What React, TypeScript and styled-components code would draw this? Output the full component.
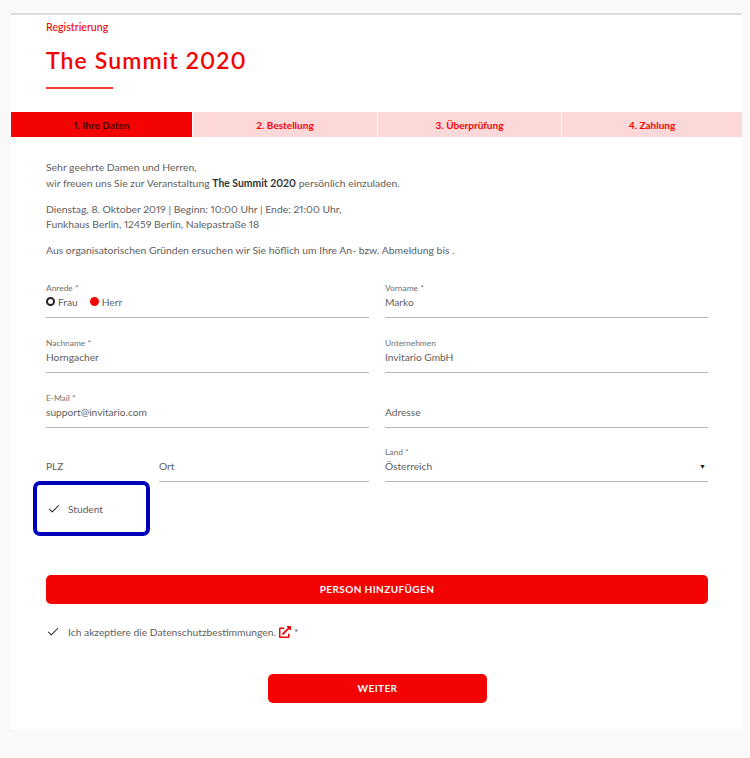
import { createGlobalStyle, styled } from "styled-components";
import { Check } from "lucide-react";
import { FaExternalLinkAlt } from "react-icons/fa";

const RED = "#f40303";

const Global = createGlobalStyle`
  html, body { margin: 0; padding: 0; background: #f9f9f9; }
  body {
    font-family: Lato, "Liberation Sans", sans-serif;
    font-variant-numeric: proportional-nums;
    color: #606060;
  }
  * { box-sizing: border-box; }
`;

const Page = styled.div`
  width: 750px;
  height: 758px;
  padding: 13px 8px 0 11px;
  overflow: hidden;
`;

const Panel = styled.main`
  width: 731px;
  height: 716px;
  background: #fff;
  border-top: 2px solid #dcdcdc;
`;

const Header = styled.header`
  padding: 5px 35px 0;
  height: 97px;
`;

const Kicker = styled.div`
  font-size: 10.7px;
  line-height: 14px;
  font-weight: 500;
  color: ${RED};
`;

const Title = styled.h1`
  margin: 12px 0 0;
  font-size: 23px;
  line-height: 28px;
  font-weight: 600;
  letter-spacing: 1.1px;
  color: ${RED};
`;

const TitleRule = styled.div`
  width: 67px;
  height: 2px;
  margin-top: 13px;
  background: #f63a3a;
`;

const Steps = styled.nav`
  display: grid;
  grid-template-columns: 181px 184px 183px 180px;
  column-gap: 1px;
`;

const Step = styled.div<{ $active?: boolean }>`
  height: 25px;
  display: flex;
  align-items: center;
  justify-content: center;
  font-size: 10px;
  font-weight: 700;
  background: ${(p) => (p.$active ? RED : "#fdd8d9")};
  color: ${(p) => (p.$active ? "#4a0000" : RED)};
`;

const Intro = styled.section`
  padding: 23px 35px 0;
  font-size: 10.4px;
  line-height: 15.5px;
`;

const Para = styled.p`
  margin: 0 0 10.5px;
  strong { color: #333; font-weight: 700; }
`;

const Form = styled.form`
  margin-top: 22px;
  padding: 0 34px 0 35px;
  display: grid;
  grid-template-columns: 323px 323px;
  grid-template-rows: 37px 37px 37px 36px;
  column-gap: 16px;
  row-gap: 18px;
`;

const Field = styled.div`
  height: 100%;
  display: flex;
  flex-direction: column;
  justify-content: flex-end;
  border-bottom: 1px solid #b4b4b4;
`;

const FieldLabel = styled.label`
  font-size: 8.4px;
  line-height: 11px;
  color: #707070;
`;

const Value = styled.div`
  height: 23px;
  display: flex;
  align-items: center;
  justify-content: space-between;
  font-size: 10.2px;
  padding-bottom: 7px;
`;

const Radios = styled(Value)`
  justify-content: flex-start;
  gap: 12px;
`;

const Radio = styled.span`
  display: inline-flex;
  align-items: center;
  gap: 3px;
`;

const Dot = styled.i<{ $on?: boolean }>`
  width: 9px;
  height: 9px;
  border-radius: 50%;
  border: 2px solid ${(p) => (p.$on ? RED : "#222")};
  background: ${(p) => (p.$on ? RED : "transparent")};
`;

const Split = styled.div`
  display: grid;
  grid-template-columns: 98px 210px;
  column-gap: 15px;
`;

const BareField = styled(Field)<{ $bare?: boolean }>`
  border-bottom-color: ${(p) => (p.$bare ? "transparent" : "#b4b4b4")};
`;

const Caret = styled.span`
  font-size: 7px;
  color: #222;
  margin-right: 2px;
`;

const FocusBox = styled.div`
  width: 117px;
  height: 55px;
  margin: -1px 0 0 22px;
  padding: 2px 0 0 10px;
  display: flex;
  align-items: center;
  gap: 7px;
  border: 4px solid #0000bb;
  border-radius: 7px;
  font-size: 10.2px;
`;

const WideButton = styled.button`
  display: block;
  width: 662px;
  height: 29px;
  margin: 39px 0 0 35px;
  border: 0;
  border-radius: 5px;
  background: ${RED};
  color: #fff;
  font-family: inherit;
  font-size: 10px;
  font-weight: 700;
  letter-spacing: 0.4px;
`;

const Consent = styled.div`
  margin: 20px 0 0 35px;
  height: 16px;
  display: flex;
  align-items: center;
  gap: 8px;
  font-size: 10.3px;
`;

const ConsentText = styled.span`
  display: inline-flex;
  align-items: center;
  gap: 3px;
  svg { color: ${RED}; }
`;

const NextButton = styled(WideButton)`
  width: 219px;
  margin: 34px 0 0 257px;
`;

export default function App() {
  return (
    <Page>
      <Global />
      <Panel>
        <Header>
          <Kicker>Registrierung</Kicker>
          <Title>The Summit 2020</Title>
          <TitleRule />
        </Header>
        <Steps>
          <Step $active>1. Ihre Daten</Step>
          <Step>2. Bestellung</Step>
          <Step>3. Überprüfung</Step>
          <Step>4. Zahlung</Step>
        </Steps>
        <Intro>
          <Para>
            Sehr geehrte Damen und Herren,
            <br />
            wir freuen uns Sie zur Veranstaltung <strong>The Summit 2020</strong> persönlich einzuladen.
          </Para>
          <Para>
            Dienstag, 8. Oktober 2019 | Beginn: 10:00 Uhr | Ende: 21:00 Uhr,
            <br />
            Funkhaus Berlin, 12459 Berlin, Nalepastraße 18
          </Para>
          <Para>Aus organisatorischen Gründen ersuchen wir Sie höflich um Ihre An- bzw. Abmeldung bis .</Para>
        </Intro>
        <Form>
          <Field>
            <FieldLabel>Anrede *</FieldLabel>
            <Radios>
              <Radio>
                <Dot /> Frau
              </Radio>
              <Radio>
                <Dot $on /> Herr
              </Radio>
            </Radios>
          </Field>
          <Field>
            <FieldLabel>Vorname *</FieldLabel>
            <Value>Marko</Value>
          </Field>
          <Field>
            <FieldLabel>Nachname *</FieldLabel>
            <Value>Horngacher</Value>
          </Field>
          <Field>
            <FieldLabel>Unternehmen</FieldLabel>
            <Value>Invitario GmbH</Value>
          </Field>
          <Field>
            <FieldLabel>E-Mail *</FieldLabel>
            <Value>support@invitario.com</Value>
          </Field>
          <Field>
            <Value>Adresse</Value>
          </Field>
          <Split>
            <BareField $bare>
              <Value>PLZ</Value>
            </BareField>
            <BareField>
              <Value>Ort</Value>
            </BareField>
          </Split>
          <Field>
            <FieldLabel>Land *</FieldLabel>
            <Value>
              Österreich
              <Caret>▼</Caret>
            </Value>
          </Field>
        </Form>
        <FocusBox>
          <Check size={14} color="#222" strokeWidth={1.8} />
          Student
        </FocusBox>
        <WideButton type="button">PERSON HINZUFÜGEN</WideButton>
        <Consent>
          <Check size={14} color="#222" strokeWidth={1.8} />
          <ConsentText>
            Ich akzeptiere die Datenschutzbestimmungen.
            <FaExternalLinkAlt size={12} /> *
          </ConsentText>
        </Consent>
        <NextButton type="button">WEITER</NextButton>
      </Panel>
    </Page>
  );
}
